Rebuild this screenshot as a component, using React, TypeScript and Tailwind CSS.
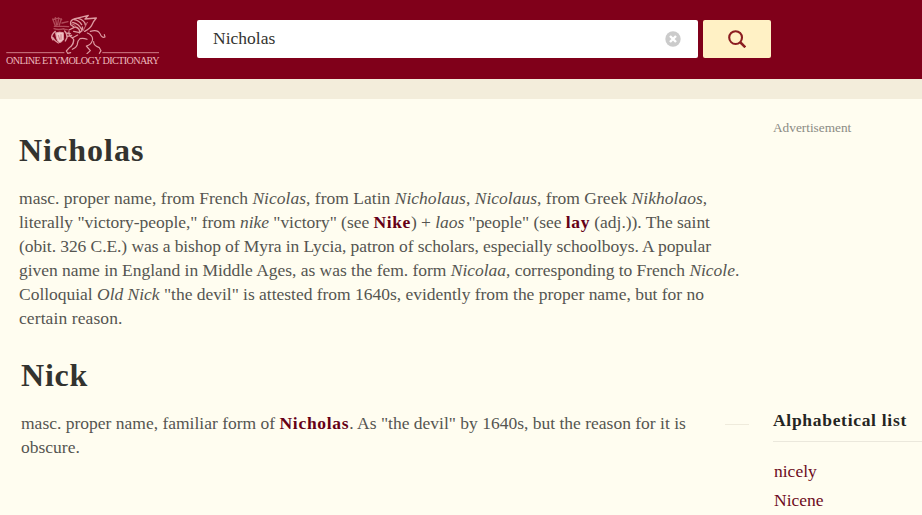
import { useState } from "react"

const alphabetical = ["nicely", "Nicene"]

function Logo() {
  return (
    <a href="#" className="block w-[153px] shrink-0 text-[#dd9aa1]">
      <svg width="153" height="42" viewBox="18 21 459 126" fill="none" stroke="currentColor" strokeLinecap="round" strokeLinejoin="round">
        <path d="M20 143H192M308 143H476" strokeWidth="3" stroke="#cf7c86" />
        {/* crown and head */}
        <g strokeWidth="4" stroke="#b04a59">
          <path d="M158 42l8 20M166 38l4 22M176 39l-3 20M184 42l-6 18M160 44q12-8 25 0M163 64h24M162 71q14 5 30 0M186 54l18-4M190 64l16 1M188 72l14 2" />
        </g>
        {/* shield */}
        <path d="M167 84q12-5 23-1l1 20q-5 9-13 10q-9-6-11-29z" fill="#f0c3c5" strokeWidth="3" />
        <path d="M175 91l4 12M183 89v14" stroke="#b95563" strokeWidth="2" />
        <path d="M166 79q-12 10-11 19l4 7M158 97q7 12 17 17M194 78q8 8 7 20l-5 10M199 84l12 2M203 94l12-3" strokeWidth="4" />
        {/* wing */}
        <path d="M207 75l16-8l-11-8q-2-12 7-16M222 42q24-6 43-11l-10 11l34-3q-9 10-13 20t-22 20M222 44q15 2 23 15M235 40q20 6 21 20M218 52q18 4 27 21M247 66q4 8-9 18M226 66q14 3 13 17l-18-4" strokeWidth="4" />
        <path d="M215 56l10 5M262 52l-13 26" strokeWidth="3" stroke="#c8737e" />
        {/* body, legs and tail */}
        <path d="M207 80q-2 14 11 18l15-8M208 91l13 12q-1 17-13 25l-9 10l4 7l9-2M221 103q2 12-8 22M240 101q-9 8-8 18q-3 9-15 14M240 101q10-3 21 2M262 84q19 8 15 23q-4 13-18 16l12 14l-10 9M281 110q-1 12 17 18l5 9l-5 8M271 79q22-7 29 7q5 14 15 10l-2-7" strokeWidth="3.5" />
      </svg>
      <span className="block h-3 whitespace-nowrap pt-px text-[10.2px] leading-3 tracking-[-0.63px] text-[#edb9bd]">
        ONLINE ETYMOLOGY DICTIONARY
      </span>
    </a>
  )
}

export default function App() {
  const [query, setQuery] = useState("Nicholas")

  return (
    <div className="h-[515px] w-[922px] overflow-hidden bg-[#fffdf0] font-['Liberation_Serif',serif] text-[#555551]">
      <header className="flex h-[79px] items-start bg-[#80001a] pl-[6px] pt-3">
        <Logo />
        <form onSubmit={(e) => e.preventDefault()} className="ml-[38px] mt-2 flex gap-[5px]">
          <div className="flex h-[38px] w-[501px] items-center rounded-[2px] bg-white pl-4 pr-[17px]">
            <input
              value={query}
              onChange={(e) => setQuery(e.target.value)}
              className="min-w-0 flex-1 pb-[2px] text-[17.5px] text-[#33332f] outline-none"
            />
            <button type="button" onClick={() => setQuery("")}>
              <svg width="16" height="16" viewBox="0 0 16 16">
                <circle cx="8" cy="8" r="7.7" fill="#cbcbcb" />
                <path d="M5 5l6 6M11 5l-6 6" stroke="#fff" strokeWidth="2.4" />
              </svg>
            </button>
          </div>
          <button type="submit" className="flex h-[38px] w-[68px] items-center justify-center rounded-[2px] bg-[#fff1c5]">
            <svg width="18" height="18" viewBox="0 0 18 18" fill="none" stroke="#8b1d20" strokeWidth="2.1">
              <circle cx="7.6" cy="7.6" r="6.4" />
              <path d="M12 12l5.3 5.3" strokeWidth="2.5" />
            </svg>
          </button>
        </form>
      </header>
      <div className="h-5 bg-[#f3eddb]" />

      <div className="flex">
        <main className="w-[725px] pl-[19px] pt-[31px]">
          <section>
            <h1 className="text-[32px] font-bold leading-10 tracking-[1px] text-[#33332f]">Nicholas</h1>
            <p className="mt-4 whitespace-nowrap text-[17.5px] leading-6">
              <span className="block tracking-[0.02px]">masc. proper name, from French <i>Nicolas</i>, from Latin <i>Nicholaus</i>, <i>Nicolaus</i>, from Greek <i>Nikholaos</i>,</span>
              <span className="block tracking-[-0.04px]">literally "victory-people," from <i>nike</i> "victory" (see <b className="tracking-[0.6px] text-[#650016]">Nike</b>) + <i>laos</i> "people" (see <b className="tracking-[0.6px] text-[#650016]">lay</b> (adj.)). The saint</span>
              <span className="block tracking-[-0.08px]">(obit. 326 C.E.) was a bishop of Myra in Lycia, patron of scholars, especially schoolboys. A popular</span>
              <span className="block tracking-[-0.03px]">given name in England in Middle Ages, as was the fem. form <i>Nicolaa</i>, corresponding to French <i>Nicole</i>.</span>
              <span className="block tracking-[-0.02px]">Colloquial <i>Old Nick</i> "the devil" is attested from 1640s, evidently from the proper name, but for no</span>
              <span className="block tracking-[0.1px]">certain reason.</span>
            </p>
          </section>
          <section className="ml-[2px] mt-[25px]">
            <h1 className="text-[32px] font-bold leading-10 tracking-[0.8px] text-[#33332f]">Nick</h1>
            <p className="mt-4 whitespace-nowrap text-[17.5px] leading-6">
              <span className="block">masc. proper name, familiar form of <b className="tracking-[0.7px] text-[#650016]">Nicholas</b>. As "the devil" by 1640s, but the reason for it is</span>
              <span className="block">obscure.</span>
            </p>
          </section>
        </main>

        <div className="mt-[325px] h-px w-6 bg-[#efebdc]" />

        <aside className="ml-6 flex-1 pt-5">
          <p className="text-[13.3px] leading-[18px] text-[#8b8b84]">Advertisement</p>
          <h2 className="mt-[271px] h-[34px] border-b border-[#ebe8dc] text-[17.5px] font-bold leading-6 tracking-[0.7px] whitespace-nowrap text-[#252522]">
            Alphabetical list
          </h2>
          <ul className="mt-[15px] pl-px text-[17.5px] leading-[29px] text-[#6d0a20]">
            {alphabetical.map((word) => (
              <li key={word}>{word}</li>
            ))}
          </ul>
        </aside>
      </div>
    </div>
  )
}
